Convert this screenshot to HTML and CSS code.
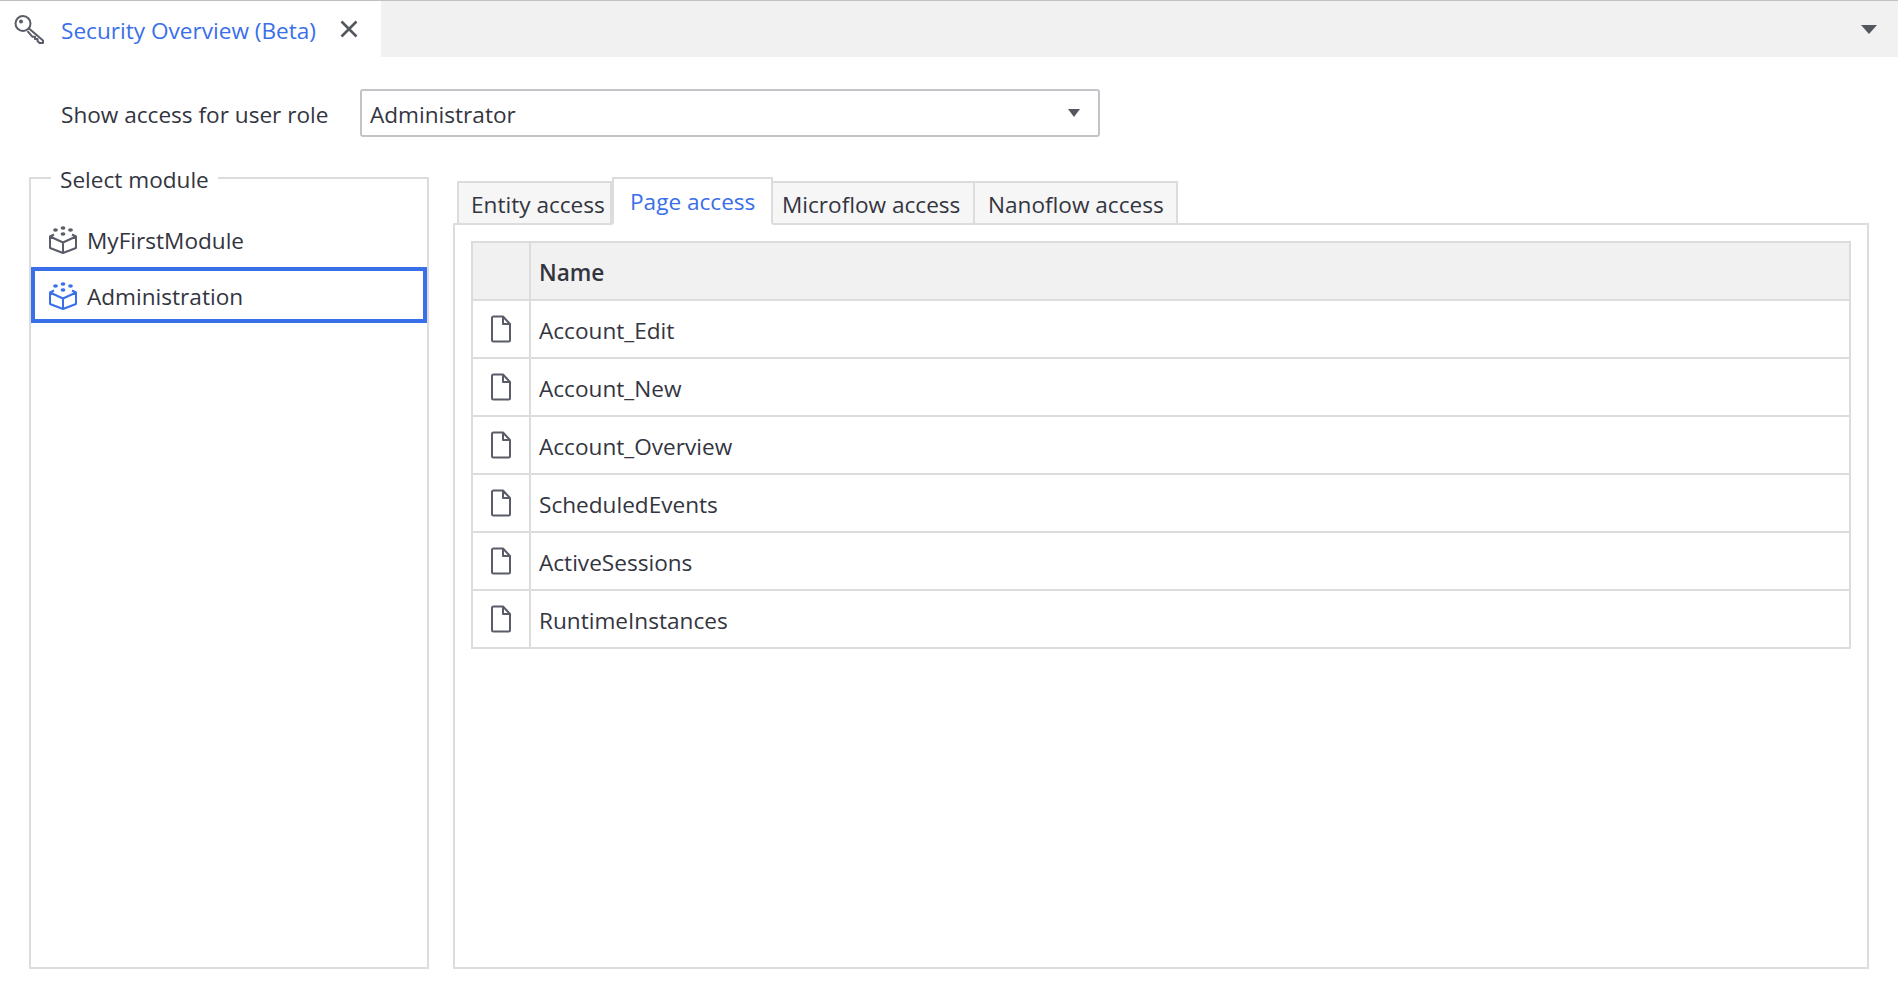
FILE: index.html
```html
<!DOCTYPE html>
<html lang="en">
<head>
  <meta charset="UTF-8" />
  <title>Security Overview (Beta)</title>
  <link rel="stylesheet" href="styles.css">
</head>
<body>
  <header class="docBar">
    <div class="docTab">
      <svg class="keyIcon" width="30" height="30" viewBox="0 0 30 30" fill="none" stroke="currentColor" stroke-width="2">
        <circle cx="9" cy="9.5" r="7.5" />
        <circle cx="7" cy="7.5" r="2" fill="currentColor" stroke="none" />
        <path d="M15 14.5 L29 26.5 V29 H25.5 L23.5 27 V25 H21 V22.8 H18.5 L13.5 17.2" stroke-linejoin="round" />
      </svg>
      <span class="docTitle">Security Overview (Beta)</span>
      <svg class="closeIcon" width="18" height="18" viewBox="0 0 18 18" stroke="currentColor" stroke-width="2.6">
        <path d="M1.5 1.5 L16.5 16.5 M16.5 1.5 L1.5 16.5" />
      </svg>
    </div>
    <div class="caret docCaret"></div>
  </header>

  <section class="roleRow">
    <label class="roleLabel">Show access for user role</label>
    <div class="roleSelect">
      <span>Administrator</span>
      <div class="caret selectCaret"></div>
    </div>
  </section>

  <main class="content">
    <fieldset class="modulePanel">
      <legend>Select module</legend>
      <div class="moduleItem">
        <svg class="cubeIcon" width="30" height="28" viewBox="0 0 30 28"><use href="#cube" /></svg>
        <span>MyFirstModule</span>
      </div>
      <div class="moduleItem selected">
        <svg class="cubeIcon" width="30" height="28" viewBox="0 0 30 28"><use href="#cube" /></svg>
        <span>Administration</span>
      </div>
    </fieldset>

    <section class="accessPanel">
      <nav class="tabs">
        <div class="tab entityTab">Entity access</div>
        <div class="tab pageTab active">Page access</div>
        <div class="tab microflowTab">Microflow access</div>
        <div class="tab nanoflowTab">Nanoflow access</div>
      </nav>
      <div class="tabBody">
        <table class="pageTable">
          <thead>
            <tr><th class="iconCol"></th><th>Name</th></tr>
          </thead>
          <tbody id="pageRows"></tbody>
        </table>
      </div>
    </section>
  </main>

  <svg class="defs" width="0" height="0">
    <symbol id="cube" viewBox="0 0 30 28">
      <g fill="currentColor">
        <ellipse cx="7.5" cy="4" rx="2.4" ry="1.8" />
        <ellipse cx="15" cy="2" rx="2.4" ry="1.8" />
        <ellipse cx="22.5" cy="4" rx="2.4" ry="1.8" />
        <ellipse cx="15" cy="8" rx="2.4" ry="1.8" />
      </g>
      <path d="M6 8.5 L2 10.5 V22 L15 27 L28 22 V10.5 L24 8.5 M2 10.5 L15 16.5 L28 10.5 M15 16.5 V27" fill="none" stroke="currentColor" stroke-width="2" stroke-linejoin="round" />
    </symbol>
  </svg>

  <script>
    const pages = ['Account_Edit', 'Account_New', 'Account_Overview', 'ScheduledEvents', 'ActiveSessions', 'RuntimeInstances'];
    const pageRows = document.getElementById('pageRows');

    pages.forEach(name => {
      const row = document.createElement('tr');
      row.innerHTML = `
        <td class="iconCol">
          <svg class="pageIcon" width="20" height="28" viewBox="0 0 20 28" fill="none" stroke="currentColor" stroke-width="2" stroke-linejoin="round">
            <path d="M2.5 1.5 H12 L19 9 V25 Q19 26.5 17.5 26.5 H2.5 Q1 26.5 1 25 V3 Q1 1.5 2.5 1.5 Z M12 1.5 V9 H19" />
          </svg>
        </td>
        <td>${name}</td>
      `;
      pageRows.appendChild(row);
    });
  </script>
</body>
</html>
```

FILE: styles.css
```css
/* Page frame */
* {
  box-sizing: border-box;
}
body {
  margin: 0;
  height: 995px;
  overflow: hidden;
  display: flex;
  flex-direction: column;
  background: #fff;
  color: #33353f;
  font-family: "Open Sans", "Noto Sans", Arial, sans-serif;
  font-size: 22.6px;
}
.defs {
  position: absolute;
}

/* Document tab strip */
.docBar {
  height: 57px;
  flex: none;
  display: flex;
  justify-content: space-between;
  align-items: center;
  background: #f1f1f1;
  border-top: 1px solid #c0c0c4;
}
.docTab {
  width: 381px;
  height: 100%;
  display: flex;
  align-items: center;
  padding-left: 14px;
  background: #fff;
}
.keyIcon {
  color: #5a5c68;
  flex: none;
  margin-right: 17px;
}
.docTitle {
  color: #3a6fea;
  white-space: nowrap;
  padding-top: 2px;
}
.closeIcon {
  color: #55575f;
  flex: none;
  margin-left: 24px;
}
.caret {
  width: 0;
  height: 0;
  border-left: 8px solid transparent;
  border-right: 8px solid transparent;
  border-top: 9px solid #55575f;
}
.docCaret {
  margin-right: 21px;
}

/* Role picker */
.roleRow {
  flex: none;
  display: flex;
  align-items: center;
  padding: 32px 0 0 61px;
}
.roleLabel {
  width: 299px;
  padding-top: 2px;
}
.roleSelect {
  width: 740px;
  height: 48px;
  display: flex;
  justify-content: space-between;
  align-items: center;
  padding: 2px 18px 0 8px;
  border: 2px solid #c4c4c8;
  border-radius: 3px;
}
.selectCaret {
  border-left-width: 6px;
  border-right-width: 6px;
  border-top-width: 8px;
  margin-bottom: 3px;
}

/* Main columns */
.content {
  flex: none;
  height: 792px;
  margin-top: 40px;
  padding: 0 29px;
  display: flex;
  gap: 24px;
}

/* Module list */
.modulePanel {
  width: 400px;
  height: 806px;
  flex: none;
  margin: -14px 0 0;
  padding: 18px 0 0;
  border: 2px solid #dcdcdc;
  min-width: 0;
}
.modulePanel legend {
  margin-left: 20px;
  padding: 4px 9px 0;
  line-height: 26px;
}
.moduleItem {
  height: 56px;
  display: flex;
  align-items: center;
  padding: 2px 0 0 13px;
  gap: 9px;
  border: 4px solid transparent;
}
.moduleItem.selected {
  border-color: #3a6fea;
}
.cubeIcon {
  color: #5a5c68;
  flex: none;
}
.selected .cubeIcon {
  color: #3a6fea;
}

/* Access tabs */
.accessPanel {
  flex: 1;
  min-width: 0;
  display: flex;
  flex-direction: column;
}
.tabs {
  height: 48px;
  flex: none;
  display: flex;
  align-items: flex-end;
  padding-left: 4px;
  margin-bottom: -2px;
  position: relative;
}
.tab {
  height: 44px;
  display: flex;
  align-items: center;
  padding-top: 2px;
  background: #f6f6f6;
  border: 2px solid #dcdcdc;
  border-left-width: 0;
}
.entityTab {
  width: 155px;
  padding-left: 12px;
  border-left-width: 2px;
}
.pageTab {
  width: 161px;
  padding-left: 16px;
}
.microflowTab {
  width: 202px;
  padding-left: 9px;
}
.nanoflowTab {
  width: 203px;
  padding-left: 13px;
}
.tab.active {
  height: 48px;
  padding-top: 0;
  background: #fff;
  color: #3a6fea;
  border-left-width: 2px;
  border-bottom-color: #fff;
}
.tabBody {
  flex: 1;
  padding: 16px 16px 0 16px;
  border: 2px solid #dcdcdc;
}

/* Page table */
.pageTable {
  width: 100%;
  table-layout: fixed;
  border-spacing: 0;
  border-top: 2px solid #dcdcdc;
  border-left: 2px solid #dcdcdc;
}
.pageTable th,
.pageTable td {
  height: 58px;
  padding: 2px 8px 0;
  text-align: left;
  border-right: 2px solid #dcdcdc;
  border-bottom: 2px solid #dcdcdc;
}
.pageTable th {
  background: #f1f1f1;
  font-weight: 600;
}
.iconCol {
  width: 58px;
}
.pageTable td.iconCol {
  padding: 0;
  text-align: center;
  line-height: 0;
}
.pageIcon {
  color: #5a5c68;
}
```
